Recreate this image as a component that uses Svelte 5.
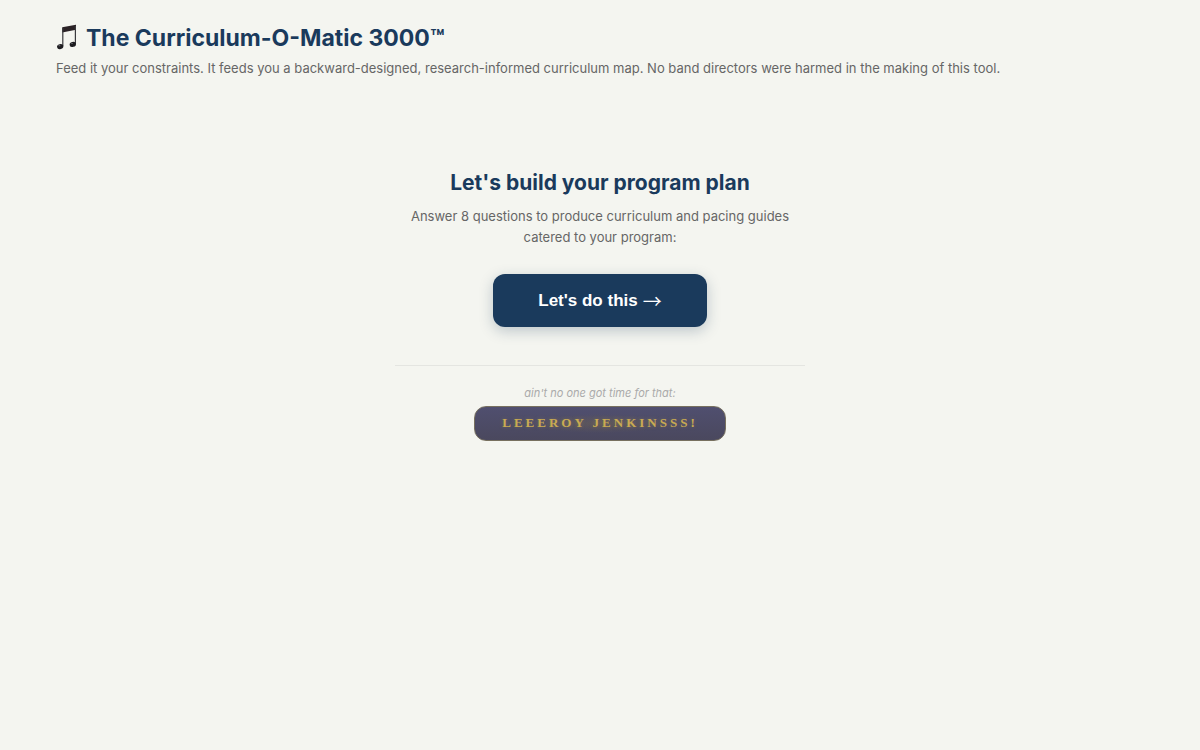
<script>
    const questionCount = 8;
    let started = $state(false);

    function start() {
        started = true;
    }
</script>

<header class="header">
    <h1>
        <svg class="note" viewBox="0 0 22 26" aria-hidden="true">
            <path d="M6.2 2.2 L20 -0.2 V4.8 L6.2 7.4 Z" fill="#2a2226" />
            <path d="M6.8 3 V21 M19.4 1 V19" fill="none" stroke="#3a3a3e" stroke-width="1.2" />
            <ellipse cx="4.2" cy="21.6" rx="3.2" ry="2.5" transform="rotate(-14 4.2 21.6)" fill="#1d1c20" />
            <ellipse cx="16.8" cy="19.4" rx="3.2" ry="2.5" transform="rotate(-14 16.8 19.4)" fill="#1d1c20" />
            <ellipse cx="3.4" cy="20.7" rx="1.1" ry="0.6" fill="#66666b" />
            <ellipse cx="16" cy="18.5" rx="1.1" ry="0.6" fill="#66666b" />
        </svg>
        The Curriculum-O-Matic 3000™
    </h1>
    <p>Feed it your constraints. It feeds you a backward-designed, research-informed curriculum map. No band directors were harmed in the making of this tool.</p>
</header>

<main class="welcome" class:started>
    <h2>Let's build your program plan</h2>
    <p class="intro">Answer {questionCount} questions to produce curriculum and pacing guides catered to your program:</p>
    <button class="start" type="button" onclick={start}>Let's do this <span class="arrow">→</span></button>

    <div class="shortcut">
        <p class="hint">ain't no one got time for that:</p>
        <button class="leeroy" type="button" onclick={start}>LEEEROY JENKINSSS!</button>
    </div>
</main>

<style>
    :global(body) {
        background: #f4f5f0;
        color: #666;
        font-family: Inter, "Liberation Sans", sans-serif;
    }

    h1,
    h2,
    p {
        margin: 0;
    }

    .header {
        padding: 20px 56px 0;
    }

    h1 {
        display: flex;
        align-items: center;
        gap: 8px;
        color: #1a3a5c;
        font-size: 23px;
        line-height: 36px;
        font-weight: 700;
    }

    .note {
        width: 22px;
        height: 26px;
        overflow: visible;
    }

    .header p {
        margin-top: 2px;
        font-size: 13px;
        line-height: 21px;
    }

    .welcome {
        max-width: 410px;
        margin: 0 auto;
        padding: 86px 20px 40px;
        text-align: center;
    }

    h2 {
        color: #1a3a5c;
        font-size: 21px;
        line-height: 36px;
        font-weight: 700;
    }

    .intro {
        margin-top: 5px;
        font-size: 13px;
        line-height: 21px;
    }

    button {
        cursor: pointer;
    }

    .start {
        display: flex;
        align-items: center;
        gap: 5px;
        margin: 26px auto 0;
        padding: 16px 45px;
        border: none;
        border-radius: 12px;
        background: #1a3a5c;
        box-shadow: 0 4px 14px rgba(26, 58, 92, 0.25);
        color: #fff;
        font-family: "Liberation Sans", Arial, sans-serif;
        font-size: 17px;
        line-height: 21px;
        font-weight: 700;
    }

    .arrow {
        font-family: "Noto Sans CJK JP", sans-serif;
        font-size: 19px;
        font-weight: 400;
    }

    .shortcut {
        margin-top: 38px;
        padding-top: 18px;
        border-top: 1px solid #e4e5e1;
    }

    .hint {
        color: #aaa;
        font-size: 11px;
        line-height: 18px;
        font-style: italic;
    }

    .leeroy {
        margin-top: 4px;
        padding: 7px 27px 9px;
        border: 1px solid #77705f;
        border-radius: 12px;
        background:
            radial-gradient(ellipse at center, rgba(120, 105, 75, 0.4), transparent 40%),
            linear-gradient(#504f6f, #4a485e);
        color: #c9ab52;
        font-family: Georgia, "Liberation Serif", serif;
        font-size: 13px;
        line-height: 17px;
        font-weight: 700;
        letter-spacing: 3px;
        text-shadow: 0 0 4px rgba(201, 171, 82, 0.3);
    }
</style>
